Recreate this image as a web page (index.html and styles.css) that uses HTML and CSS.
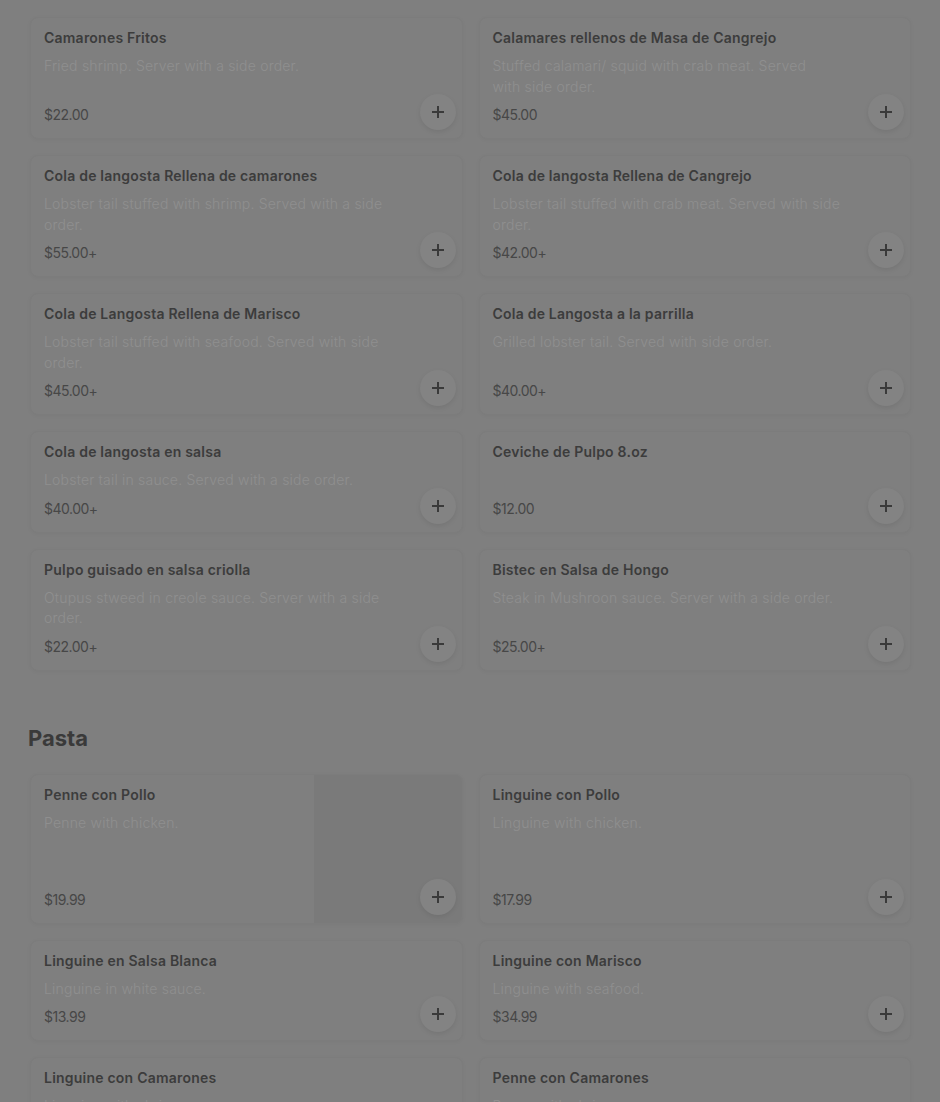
FILE: index.html
```html
<!DOCTYPE html>
<html lang="es">
<head>
    <meta charset="UTF-8">
    <meta name="viewport" content="width=device-width, initial-scale=1.0">
    <title>Menú - Mariscos y Pasta</title>
    <link rel="stylesheet" href="styles.css">
</head>
<body>
    <main class="menu">
        <!-- Mariscos -->
        <section class="category">
            <div class="items">
                <div class="item">
                    <h3 class="item-name">Camarones Fritos</h3>
                    <p class="item-desc">Fried shrimp. Server with a side order.</p>
                    <span class="item-price">$22.00</span>
                    <button class="add-btn" aria-label="Agregar"><svg viewBox="0 0 16 16"><path d="M8 2v12M2 8h12"/></svg></button>
                </div>
                <div class="item">
                    <h3 class="item-name">Calamares rellenos de Masa de Cangrejo</h3>
                    <p class="item-desc">Stuffed calamari/ squid with crab meat. Served with&nbsp;side order.</p>
                    <span class="item-price">$45.00</span>
                    <button class="add-btn" aria-label="Agregar"><svg viewBox="0 0 16 16"><path d="M8 2v12M2 8h12"/></svg></button>
                </div>
                <div class="item">
                    <h3 class="item-name">Cola de langosta Rellena de camarones</h3>
                    <p class="item-desc">Lobster tail stuffed with shrimp. Served with a side order.</p>
                    <span class="item-price">$55.00+</span>
                    <button class="add-btn" aria-label="Agregar"><svg viewBox="0 0 16 16"><path d="M8 2v12M2 8h12"/></svg></button>
                </div>
                <div class="item">
                    <h3 class="item-name">Cola de langosta Rellena de Cangrejo</h3>
                    <p class="item-desc">Lobster tail stuffed with crab meat. Served with side order.</p>
                    <span class="item-price">$42.00+</span>
                    <button class="add-btn" aria-label="Agregar"><svg viewBox="0 0 16 16"><path d="M8 2v12M2 8h12"/></svg></button>
                </div>
                <div class="item">
                    <h3 class="item-name">Cola de Langosta Rellena de Marisco</h3>
                    <p class="item-desc">Lobster tail stuffed with seafood. Served with side order.</p>
                    <span class="item-price">$45.00+</span>
                    <button class="add-btn" aria-label="Agregar"><svg viewBox="0 0 16 16"><path d="M8 2v12M2 8h12"/></svg></button>
                </div>
                <div class="item">
                    <h3 class="item-name">Cola de Langosta a la parrilla</h3>
                    <p class="item-desc">Grilled lobster tail. Served with side order.</p>
                    <span class="item-price">$40.00+</span>
                    <button class="add-btn" aria-label="Agregar"><svg viewBox="0 0 16 16"><path d="M8 2v12M2 8h12"/></svg></button>
                </div>
                <div class="item">
                    <h3 class="item-name">Cola de langosta en salsa</h3>
                    <p class="item-desc">Lobster tail in sauce. Served with a side order.</p>
                    <span class="item-price">$40.00+</span>
                    <button class="add-btn" aria-label="Agregar"><svg viewBox="0 0 16 16"><path d="M8 2v12M2 8h12"/></svg></button>
                </div>
                <div class="item">
                    <h3 class="item-name">Ceviche de Pulpo 8.oz</h3>
                    <span class="item-price">$12.00</span>
                    <button class="add-btn" aria-label="Agregar"><svg viewBox="0 0 16 16"><path d="M8 2v12M2 8h12"/></svg></button>
                </div>
                <div class="item">
                    <h3 class="item-name">Pulpo guisado en salsa criolla</h3>
                    <p class="item-desc">Otupus stweed in creole sauce. Server with a side order.</p>
                    <span class="item-price">$22.00+</span>
                    <button class="add-btn" aria-label="Agregar"><svg viewBox="0 0 16 16"><path d="M8 2v12M2 8h12"/></svg></button>
                </div>
                <div class="item">
                    <h3 class="item-name">Bistec en Salsa de Hongo</h3>
                    <p class="item-desc">Steak in Mushroon sauce. Server with a side order.</p>
                    <span class="item-price">$25.00+</span>
                    <button class="add-btn" aria-label="Agregar"><svg viewBox="0 0 16 16"><path d="M8 2v12M2 8h12"/></svg></button>
                </div>
            </div>
        </section>

        <!-- Pasta -->
        <section class="category">
            <h2 class="category-title">Pasta</h2>
            <div class="items">
                <div class="item item-photo">
                    <div class="item-body">
                        <h3 class="item-name">Penne con Pollo</h3>
                        <p class="item-desc">Penne with chicken.</p>
                        <span class="item-price">$19.99</span>
                    </div>
                    <div class="item-thumb"></div>
                    <button class="add-btn" aria-label="Agregar"><svg viewBox="0 0 16 16"><path d="M8 2v12M2 8h12"/></svg></button>
                </div>
                <div class="item">
                    <h3 class="item-name">Linguine con Pollo</h3>
                    <p class="item-desc">Linguine with chicken.</p>
                    <span class="item-price">$17.99</span>
                    <button class="add-btn" aria-label="Agregar"><svg viewBox="0 0 16 16"><path d="M8 2v12M2 8h12"/></svg></button>
                </div>
                <div class="item">
                    <h3 class="item-name">Linguine en Salsa Blanca</h3>
                    <p class="item-desc">Linguine in white sauce.</p>
                    <span class="item-price">$13.99</span>
                    <button class="add-btn" aria-label="Agregar"><svg viewBox="0 0 16 16"><path d="M8 2v12M2 8h12"/></svg></button>
                </div>
                <div class="item">
                    <h3 class="item-name">Linguine con Marisco</h3>
                    <p class="item-desc">Linguine with seafood.</p>
                    <span class="item-price">$34.99</span>
                    <button class="add-btn" aria-label="Agregar"><svg viewBox="0 0 16 16"><path d="M8 2v12M2 8h12"/></svg></button>
                </div>
                <div class="item">
                    <h3 class="item-name">Linguine con Camarones</h3>
                    <p class="item-desc">Linguine with shrimp.</p>
                    <span class="item-price">$15.99</span>
                    <button class="add-btn" aria-label="Agregar"><svg viewBox="0 0 16 16"><path d="M8 2v12M2 8h12"/></svg></button>
                </div>
                <div class="item">
                    <h3 class="item-name">Penne con Camarones</h3>
                    <p class="item-desc">Penne with shrimp.</p>
                    <span class="item-price">$15.99</span>
                    <button class="add-btn" aria-label="Agregar"><svg viewBox="0 0 16 16"><path d="M8 2v12M2 8h12"/></svg></button>
                </div>
            </div>
        </section>
    </main>
</body>
</html>
```

FILE: styles.css
```css
* {
    margin: 0;
    padding: 0;
    box-sizing: border-box;
}
html, body {
    overflow: hidden;
}
body {
    background: #7f7f7f;
    font-family: Inter, "Liberation Sans", sans-serif;
    font-size: 14px;
    color: #3c3c3c;
}
.menu {
    padding: 17px 29px 40px 30px;
}
.category + .category {
    margin-top: 53px;
}
.category-title {
    margin-left: -2px;
    margin-bottom: 22px;
    font-size: 22px;
    line-height: 28px;
    font-weight: 700;
    color: #3a3a3a;
}
.items {
    display: grid;
    grid-template-columns: 1fr 1fr;
    gap: 16px;
}
.item {
    position: relative;
    display: flex;
    flex-direction: column;
    padding: 10px 13px 13px;
    background: #7f7f7f;
    border: 1px solid #7c7c7c;
    border-radius: 8px;
    box-shadow: 0 1px 4px rgba(0,0,0,0.04);
}
.item-photo {
    flex-direction: row;
    padding: 0;
}
.item-photo .item-body {
    flex: 1;
    display: flex;
    flex-direction: column;
    padding: 10px 13px 13px;
}
.item-thumb {
    width: 148px;
    height: 148px;
    background: #7a7a7a;
    border-radius: 0 7px 7px 0;
}
.item-name {
    font-size: 14px;
    line-height: 20px;
    font-weight: 600;
    letter-spacing: 0.22px;
    color: #3c3c3c;
}
.item-desc {
    max-width: 350px;
    margin-top: 8px;
    font-size: 14px;
    line-height: 20.5px;
    font-weight: 300;
    letter-spacing: 0.2px;
    color: #8f8f8f;
}
.item-price {
    margin-top: auto;
    padding-top: 8px;
    font-size: 14px;
    line-height: 20px;
    letter-spacing: -0.5px;
    color: #474747;
}
.add-btn {
    position: absolute;
    right: 6px;
    bottom: 8px;
    width: 36px;
    height: 36px;
    display: flex;
    align-items: center;
    justify-content: center;
    border: none;
    border-radius: 50%;
    background: #838383;
    box-shadow: 0 2px 5px rgba(0,0,0,0.08);
    cursor: pointer;
}
.add-btn svg {
    width: 16px;
    height: 16px;
    fill: none;
    stroke: #3a3a3a;
    stroke-width: 2;
}
```
